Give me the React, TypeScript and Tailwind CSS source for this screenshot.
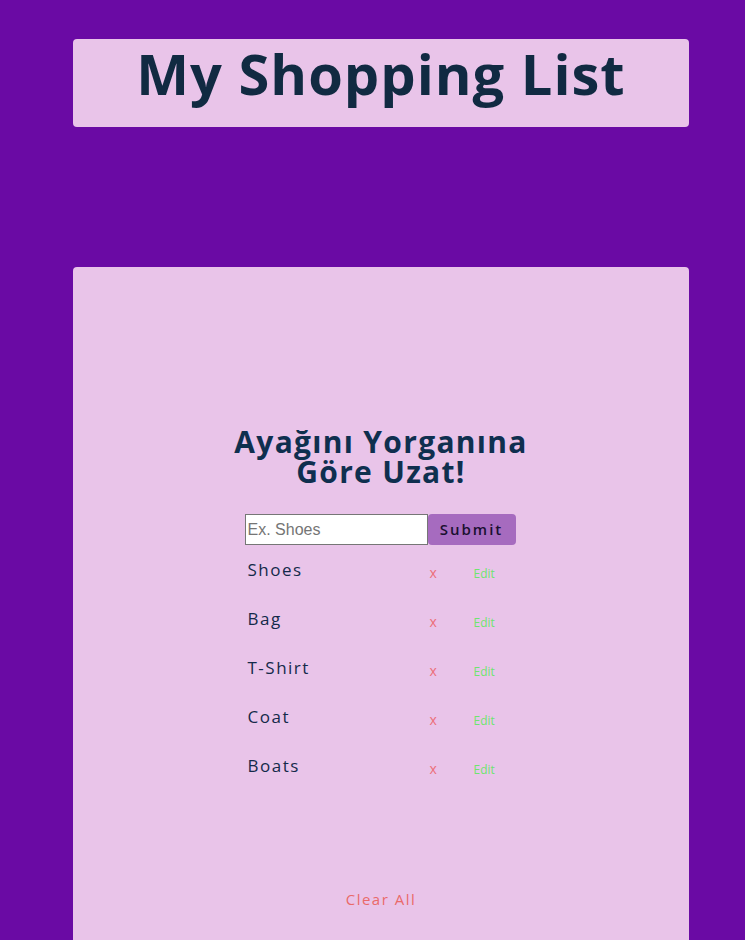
import { useState } from "react";

const initialItems = ["Shoes", "Bag", "T-Shirt", "Coat", "Boats"];

export default function App() {
  const [items, setItems] = useState(initialItems);
  const [text, setText] = useState("");

  return (
    <div
      className="min-h-[940px] bg-[#6a0aa4] pt-[39px]"
      style={{ fontFamily: '"Open Sans", "Noto Sans", sans-serif' }}
    >
      <header className="ml-[73px] w-[616px] h-[88px] rounded bg-[#e9c4e9] flex justify-center pt-[4px]">
        <h1 className="text-[56px] font-bold tracking-[1px] text-[#112a42] leading-[60px]">
          My Shopping List
        </h1>
      </header>

      <main className="ml-[73px] mt-[140px] w-[616px] h-[673px] rounded-t bg-[#e9c4e9] flex flex-col items-center pt-[160px]">
        <h2 className="text-[30px] font-bold tracking-[1.3px] leading-[30px] text-[#0f2f4f] text-center">
          Ayağını Yorganına
          <br />
          Göre Uzat!
        </h2>

        <form
          className="mt-[27px] flex -ml-[2px]"
          onSubmit={(e) => {
            e.preventDefault();
            if (text.trim()) setItems([...items, text.trim()]);
            setText("");
          }}
        >
          <input
            value={text}
            onChange={(e) => setText(e.target.value)}
            placeholder="Ex. Shoes"
            className="w-[183px] h-[31px] border border-[#767676] bg-white px-[2px] text-[16px] text-black placeholder:text-[#757575] outline-none"
            style={{ fontFamily: '"Liberation Sans", Arial, sans-serif' }}
          />
          <button
            type="submit"
            className="w-[88px] h-[31px] rounded bg-[#a66bbf] text-[15px] font-semibold tracking-[2px] text-[#1a1030]"
          >
            Submit
          </button>
        </form>

        <ul className="mt-[12px] w-[271px] -ml-[2px]">
          {items.map((item, i) => (
            <li key={i} className="h-[49px] flex items-start">
              <span className="w-[182px] pl-[3px] text-[17px] tracking-[1.5px] text-[#142a4a]">
                {item}
              </span>
              <button
                onClick={() => setItems(items.filter((_, j) => j !== i))}
                className="mt-[5px] w-[47px] text-left pl-[3px] text-[14px] text-[#ec6f79]"
              >
                x
              </button>
              <button className="mt-[8px] text-[12px] text-[#6fe56f]">Edit</button>
            </li>
          ))}
        </ul>

        <button
          onClick={() => setItems([])}
          className="mt-[86px] text-[15px] font-medium tracking-[1.5px] text-[#e96a6a]"
        >
          Clear All
        </button>
      </main>
    </div>
  );
}
